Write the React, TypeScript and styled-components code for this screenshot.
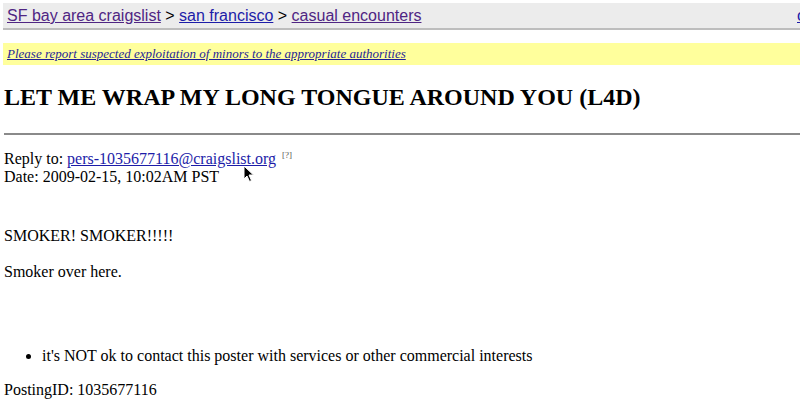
import React from 'react';
import styled, { createGlobalStyle } from 'styled-components';

const GlobalStyle = createGlobalStyle`
  html, body {
    margin: 0;
    padding: 0;
    background: #fff;
    color: #000;
    font-family: "Liberation Serif", "Times New Roman", serif;
    font-size: 16px;
    overflow: hidden;
  }
`;

const Page = styled.div`
  padding: 3px 0 0 3px;
  width: 797px;
`;

const Breadcrumb = styled.div`
  background-color: #ececec;
  border-bottom: 2px solid #bdbdbd;
  height: 24px;
  line-height: 24px;
  padding: 1px 0 0 4px;
  font-family: "Liberation Sans", Arial, sans-serif;
  font-size: 16px;
  white-space: nowrap;
  overflow: hidden;
  display: flex;
  justify-content: space-between;
`;

const CrumbLink = styled.a<{ $visited?: boolean }>`
  color: ${(p) => (p.$visited ? '#4f2583' : '#1c1ca8')};
  text-decoration: underline;
`;

// only the first few pixels of this link show at the window's edge
const RightLink = styled.a`
  flex: 0 0 3px;
  overflow: hidden;
  color: #1c1ca8;
  text-decoration: underline;
`;

const Warning = styled.div`
  margin-top: 13px;
  background-color: #ffff9c;
  height: 22px;
  line-height: 22px;
  padding-left: 4px;
  font-size: 13px;
  font-style: italic;
  a {
    color: #1f1f96;
  }
`;

const Title = styled.h2`
  margin: 18px 0 0 1px;
  font-size: 24px;
  font-weight: bold;
  line-height: 28px;
`;

const Rule = styled.hr`
  margin: 22px 0 0 1px;
  border: none;
  border-top: 2px solid #8a8a8a;
  height: 0;
`;

const Meta = styled.div`
  margin: 11px 0 0 1px;
  line-height: 18px;
  a {
    color: #1c1ca8;
  }
`;

const Footnote = styled.sup`
  font-size: 9px;
  color: #555;
  margin-left: 6px;
  vertical-align: 6px;
`;

const Body = styled.div`
  margin: 41px 0 0 1px;
  line-height: 18px;
  p {
    margin: 0 0 18px;
  }
`;

const Notices = styled.ul`
  margin: 66px 0 0;
  padding-left: 39px;
  li {
    line-height: 18px;
  }
`;

const PostingId = styled.div`
  margin: 16px 0 0 1px;
  line-height: 18px;
`;

const Cursor = styled.svg`
  position: absolute;
  left: 243px;
  top: 165px;
`;

export default function App() {
  return (
    <>
      <GlobalStyle />
      <Page>
        <Breadcrumb>
          <span>
            <CrumbLink $visited href="#">SF bay area craigslist</CrumbLink> &gt;{' '}
            <CrumbLink href="#">san francisco</CrumbLink> &gt;{' '}
            <CrumbLink $visited href="#">casual encounters</CrumbLink>
          </span>
          <RightLink href="#">o</RightLink>
        </Breadcrumb>
        <Warning>
          <a href="#">Please report suspected exploitation of minors to the appropriate authorities</a>
        </Warning>
        <Title>LET ME WRAP MY LONG TONGUE AROUND YOU (L4D)</Title>
        <Rule />
        <Meta>
          Reply to: <a href="#">pers-1035677116@craigslist.org</a>
          <Footnote>[?]</Footnote>
          <br />
          Date: 2009-02-15, 10:02AM PST
        </Meta>
        <Body>
          <p>SMOKER! SMOKER!!!!!</p>
          <p>Smoker over here.</p>
        </Body>
        <Notices>
          <li>it's NOT ok to contact this poster with services or other commercial interests</li>
        </Notices>
        <PostingId>PostingID: 1035677116</PostingId>
      </Page>
      <Cursor width="12" height="18" viewBox="0 0 12 18">
        <path d="M1 1 L1 14 L4 11 L6.5 16.5 L8.5 15.5 L6 10 L10.5 10 Z" fill="#000" stroke="#fff" strokeWidth="1" />
      </Cursor>
    </>
  );
}
